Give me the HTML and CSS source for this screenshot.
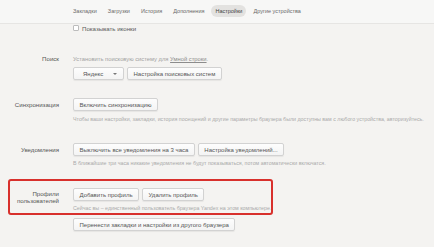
FILE: index.html
```html
<!DOCTYPE html>
<html lang="ru">
<head>
<meta charset="utf-8">
<title>Настройки</title>
<link rel="stylesheet" href="styles.css">
</head>
<body>
<header class="topbar">
  <nav class="nav">
    <span class="nav-item">Закладки</span>
    <span class="nav-item">Загрузки</span>
    <span class="nav-item">История</span>
    <span class="nav-item">Дополнения</span>
    <span class="nav-item active">Настройки</span>
    <span class="nav-item">Другие устройства</span>
  </nav>
</header>
<main class="page">
  <div class="check-row">
    <span class="checkbox"></span>
    <span class="check-label">Показывать иконки</span>
  </div>

  <section class="section search">
    <div class="label label-top">Поиск</div>
    <div class="content">
      <p class="lead">Установить поисковую систему для <span class="link">Умной строки</span>.</p>
      <div class="buttons">
        <span class="btn select">Яндекс <span class="caret"></span></span>
        <span class="btn">Настройка поисковых систем</span>
      </div>
    </div>
  </section>

  <section class="section sync">
    <div class="label label-btn">Синхронизация</div>
    <div class="content">
      <div class="buttons"><span class="btn">Включить синхронизацию</span></div>
      <p class="note">Чтобы ваши настройки, закладки, история посещений и другие параметры браузера были доступны вам с любого устройства, авторизуйтесь.</p>
    </div>
  </section>

  <section class="section notify">
    <div class="label label-btn">Уведомления</div>
    <div class="content">
      <div class="buttons">
        <span class="btn">Выключить все уведомления на 3 часа</span>
        <span class="btn">Настройка уведомлений...</span>
      </div>
      <p class="note">В ближайшие три часа никакие уведомления не будут показываться, потом автоматически включатся.</p>
    </div>
  </section>

  <section class="section profiles">
    <div class="label label-two">Профили<br>пользователей</div>
    <div class="content">
      <div class="buttons">
        <span class="btn">Добавить профиль</span>
        <span class="btn">Удалить профиль</span>
      </div>
      <p class="note">Сейчас вы – единственный пользователь браузера Yandex на этом компьютере.</p>
    </div>
  </section>

  <section class="section import">
    <div class="label"></div>
    <div class="content">
      <div class="buttons"><span class="btn">Перенести закладки и настройки из другого браузера</span></div>
    </div>
  </section>
</main>
</body>
</html>
```
FILE: styles.css
```css
* { box-sizing: border-box; }
html, body { margin: 0; padding: 0; }
body {
  background: #f4f3f1;
  font-family: "Liberation Sans", Arial, sans-serif;
  color: #555;
  width: 434px;
  height: 247px;
  overflow: hidden;
}
.topbar {
  height: 24px;
  background: #f7f7f6;
  border-bottom: 1px solid #e6e5e3;
}
.nav {
  display: flex;
  align-items: center;
  padding: 5px 0 0 69px;
  gap: 3px;
}
.nav-item {
  font-size: 5.5px;
  color: #6a6a6a;
  height: 12px;
  line-height: 12px;
  padding: 0 4px;
  border-radius: 6px;
}
.nav-item.active {
  background: #e3e2e0;
  color: #444;
}
.check-row {
  display: flex;
  align-items: center;
  gap: 3px;
  margin-left: 73px;
  height: 8px;
}
.checkbox {
  width: 6px;
  height: 6px;
  border: 1px solid #bcbcbc;
  border-radius: 1px;
  background: #fff;
}
.check-label {
  font-size: 6.1px;
  color: #5a5a5a;
}
.section {
  display: grid;
  grid-template-columns: 49px 1fr;
  column-gap: 14px;
  margin-left: 10px;
}
.label {
  text-align: right;
  font-size: 6.1px;
  color: #555;
  line-height: 8px;
}
.label-btn { padding-top: 2.5px; }
.label-two { line-height: 7px; padding-top: 2px; }
.content { display: flex; flex-direction: column; align-items: flex-start; }
p { margin: 0; }
.lead {
  font-size: 5.8px;
  color: #a2a2a2;
  line-height: 8px;
}
.link { text-decoration: underline; color: #8c8c8c; }
.note {
  font-size: 5.3px;
  color: #aaa;
  line-height: 8px;
  white-space: nowrap;
}
.buttons { display: flex; gap: 3px; }
.btn {
  display: inline-flex;
  align-items: center;
  height: 13px;
  padding: 0 5.5px;
  font-size: 6px;
  color: #555;
  background: linear-gradient(#fdfdfd, #f4f4f4);
  border: 1px solid #d2d2d2;
  border-radius: 2px;
  box-shadow: 0 1px 1px rgba(0,0,0,0.06);
  white-space: nowrap;
}
.btn.select { width: 51px; justify-content: space-between; padding: 0 6px 0 9px; }
.caret {
  width: 0; height: 0;
  border-left: 2px solid transparent;
  border-right: 2px solid transparent;
  border-top: 2px solid #777;
}
.search { margin-top: 23px; }
.search .buttons { margin-top: 4px; }
.sync { margin-top: 18px; }
.sync .note { margin-top: 4px; }
.notify { margin-top: 20px; }
.notify .note { margin-top: 3px; }
.profiles {
  margin-top: 12px;
  margin-left: 8px;
  width: 265px;
  border: 2px solid #d8302c;
  border-radius: 3px;
  padding: 7px 0 1px 0;
}
.profiles .note { margin-top: 3px; }
.import { margin-top: 3px; }
```
